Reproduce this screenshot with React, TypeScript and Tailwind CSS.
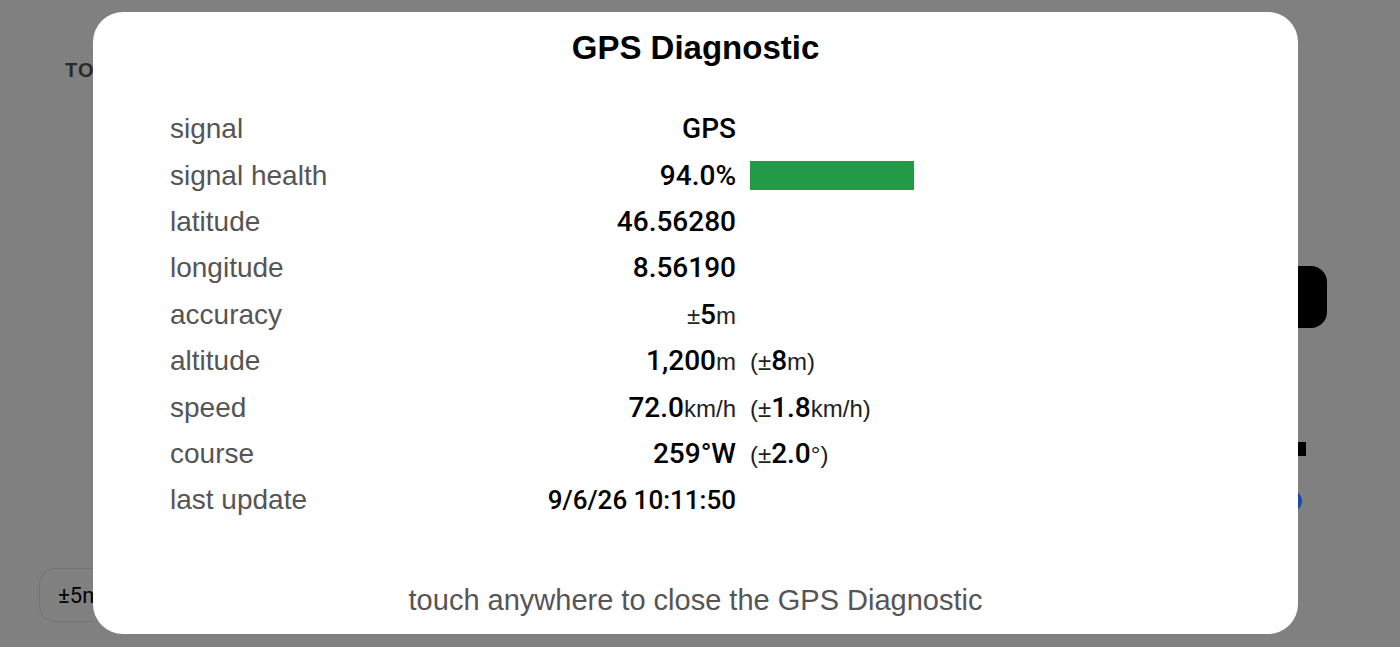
import React from 'react';

type Row = {
    label: string;
    value: React.ReactNode;
    extra?: React.ReactNode;
    small?: boolean;
};

const LABEL_FONT = { fontFamily: '"Liberation Sans", Arial, sans-serif' };
const VALUE_FONT = { fontFamily: 'Roboto, "DejaVu Sans Condensed", sans-serif' };

// thin unit text next to the bold numbers
const Unit: React.FC<{ children: React.ReactNode }> = ({ children }) => (
    <span className="text-[24px] font-normal text-[#222]" style={LABEL_FONT}>{children}</span>
);

const rows: Row[] = [
    { label: 'signal', value: 'GPS' },
    {
        label: 'signal health',
        value: '94.0%',
        extra: <div className="h-[29px] w-[164px] bg-[#229a47]" />,
    },
    { label: 'latitude', value: '46.56280' },
    { label: 'longitude', value: '8.56190' },
    { label: 'accuracy', value: <><Unit>±</Unit>5<Unit>m</Unit></> },
    {
        label: 'altitude',
        value: <>1,200<Unit>m</Unit></>,
        extra: <><Unit>(±</Unit>8<Unit>m)</Unit></>,
    },
    {
        label: 'speed',
        value: <>72.0<Unit>km/h</Unit></>,
        extra: <><Unit>(±</Unit>1.8<Unit>km/h)</Unit></>,
    },
    {
        label: 'course',
        value: '259°W',
        extra: <><Unit>(±</Unit>2.0<Unit>°)</Unit></>,
    },
    { label: 'last update', value: '9/6/26 10:11:50', small: true },
];

const App: React.FC = () => {
    return (
        <div className="relative h-[647px] w-[1400px] overflow-hidden bg-[#808080]">
            {/* page underneath the dialog (dimmed) */}
            <div className="flex h-full flex-col">
                <div className="pl-[65px] pt-[59px] text-[20px] font-bold leading-[22px] tracking-[0.06em] text-[#2a2a2a]" style={LABEL_FONT}>
                    TOTAL DISTANCE
                </div>
                <div className="mt-[185px] flex justify-end pr-[73px]">
                    <div className="h-[62px] w-[120px] rounded-[16px] bg-black" />
                </div>
                <div className="mt-[114px] flex justify-end pr-[94px]">
                    <div className="h-[14px] w-[40px] bg-black" />
                </div>
                <div className="mt-[34px] flex justify-end pr-[98px]">
                    <div className="h-[22px] w-[22px] rounded-full bg-[#1c4a9c]" />
                </div>
                <div className="mb-[25px] ml-[39px] mt-auto">
                    <div className="flex h-[54px] w-[120px] items-center rounded-[16px] border border-[#737373] px-[18px] text-[22px] text-black" style={VALUE_FONT}>
                        ±5m
                    </div>
                </div>
            </div>

            {/* dialog */}
            <div className="absolute inset-0 pl-[93px] pt-[12px]">
                <div className="flex h-[622px] w-[1205px] flex-col rounded-[30px] bg-white">
                    <h1 className="pt-[16px] text-center text-[33px] font-bold leading-[40px] text-black" style={LABEL_FONT}>
                        GPS Diagnostic
                    </h1>

                    <div className="mt-[38px] flex flex-col pl-[77px]">
                        {rows.map(row => (
                            <div key={row.label} className="flex h-[46.4px] items-center">
                                <div className="w-[300px] text-[28px] text-[#555]" style={LABEL_FONT}>{row.label}</div>
                                <div
                                    className={`w-[266px] text-right font-medium text-black ${row.small ? 'text-[26px]' : 'text-[28px]'}`}
                                    style={VALUE_FONT}
                                >
                                    {row.value}
                                </div>
                                {row.extra && (
                                    <div className="ml-[14px] flex items-baseline text-[28px] font-medium text-black" style={VALUE_FONT}>
                                        {row.extra}
                                    </div>
                                )}
                            </div>
                        ))}
                    </div>

                    <p className="mt-auto pb-[16px] text-center text-[29px] leading-[36px] text-[#555]" style={LABEL_FONT}>
                        touch anywhere to close the GPS Diagnostic
                    </p>
                </div>
            </div>
        </div>
    );
};

export default App;
